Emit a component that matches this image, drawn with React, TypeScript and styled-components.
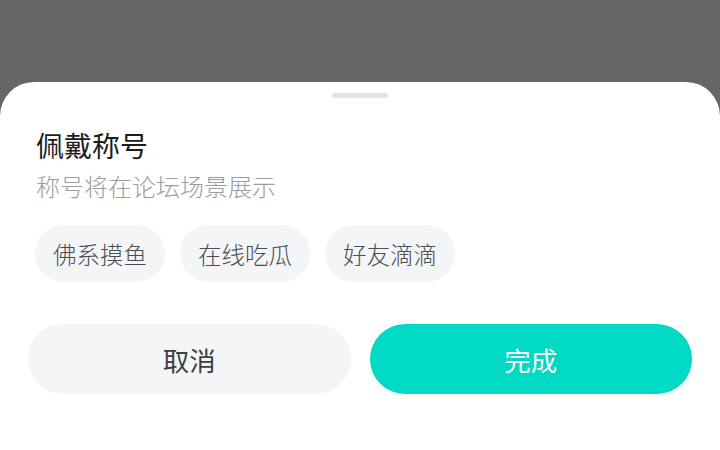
import React, { useState } from "react";
import styled, { createGlobalStyle } from "styled-components";

const GlobalStyle = createGlobalStyle`
  html, body {
    margin: 0;
    padding: 0;
    height: 100%;
    background: #666666;
  }
  #root {
    height: 100%;
  }
  * {
    box-sizing: border-box;
  }
`;

const titles = ["佛系摸鱼", "在线吃瓜", "好友滴滴"];

const App: React.FC = () => {
  const [selected, setSelected] = useState<string | null>(null);

  return (
    <>
      <GlobalStyle />
      <Screen>
        <Sheet>
          <Handle />
          <Header>
            <Title>佩戴称号</Title>
            <Subtitle>称号将在论坛场景展示</Subtitle>
          </Header>
          <ChipRow>
            {titles.map((t) => (
              <Chip
                key={t}
                $active={selected === t}
                onClick={() => setSelected(t)}
              >
                {t}
              </Chip>
            ))}
          </ChipRow>
          <ButtonRow>
            <ActionButton $primary={false}>取消</ActionButton>
            <ActionButton $primary>完成</ActionButton>
          </ButtonRow>
        </Sheet>
      </Screen>
    </>
  );
};

const Screen = styled.div`
  height: 100vh;
  display: flex;
  flex-direction: column;
  justify-content: flex-end;
  font-family: "Noto Sans CJK SC", "Noto Sans", sans-serif;
`;

const Sheet = styled.div`
  height: 368px;
  background: #ffffff;
  border-radius: 34px 34px 0 0;
  padding: 11px 28px 0;
  display: flex;
  flex-direction: column;
`;

const Handle = styled.div`
  align-self: center;
  width: 56px;
  height: 5px;
  border-radius: 3px;
  background: #e1e3e8;
`;

const Header = styled.div`
  padding: 29px 8px 0;
  display: flex;
  flex-direction: column;
  gap: 6px;
`;

const Title = styled.h1`
  margin: 0;
  font-size: 28px;
  line-height: 36px;
  font-weight: 400;
  color: #1c1c1e;
`;

const Subtitle = styled.p`
  margin: 0;
  font-size: 24px;
  line-height: 34px;
  font-weight: 300;
  color: #9a9da4;
`;

const ChipRow = styled.div`
  display: flex;
  gap: 15px;
  padding: 22px 7px 0;
`;

const Chip = styled.button<{ $active: boolean }>`
  height: 57px;
  padding: 0 18px;
  border: none;
  border-radius: 29px;
  background: ${({ $active }) => ($active ? "#dff9f6" : "#f4f5f7")};
  color: ${({ $active }) => ($active ? "#00bfae" : "#4a4d53")};
  font-family: inherit;
  font-size: 23.5px;
  font-weight: 300;
  cursor: pointer;
`;

const ButtonRow = styled.div`
  display: flex;
  gap: 19px;
  padding-top: 42px;
`;

const ActionButton = styled.button<{ $primary: boolean }>`
  flex: 1;
  height: 70px;
  border: none;
  border-radius: 35px;
  background: ${({ $primary }) => ($primary ? "#00d9c4" : "#f4f5f7")};
  color: ${({ $primary }) => ($primary ? "#ffffff" : "#3c3f45")};
  font-family: inherit;
  font-size: 26.5px;
  font-weight: 400;
  cursor: pointer;
`;

export default App;
